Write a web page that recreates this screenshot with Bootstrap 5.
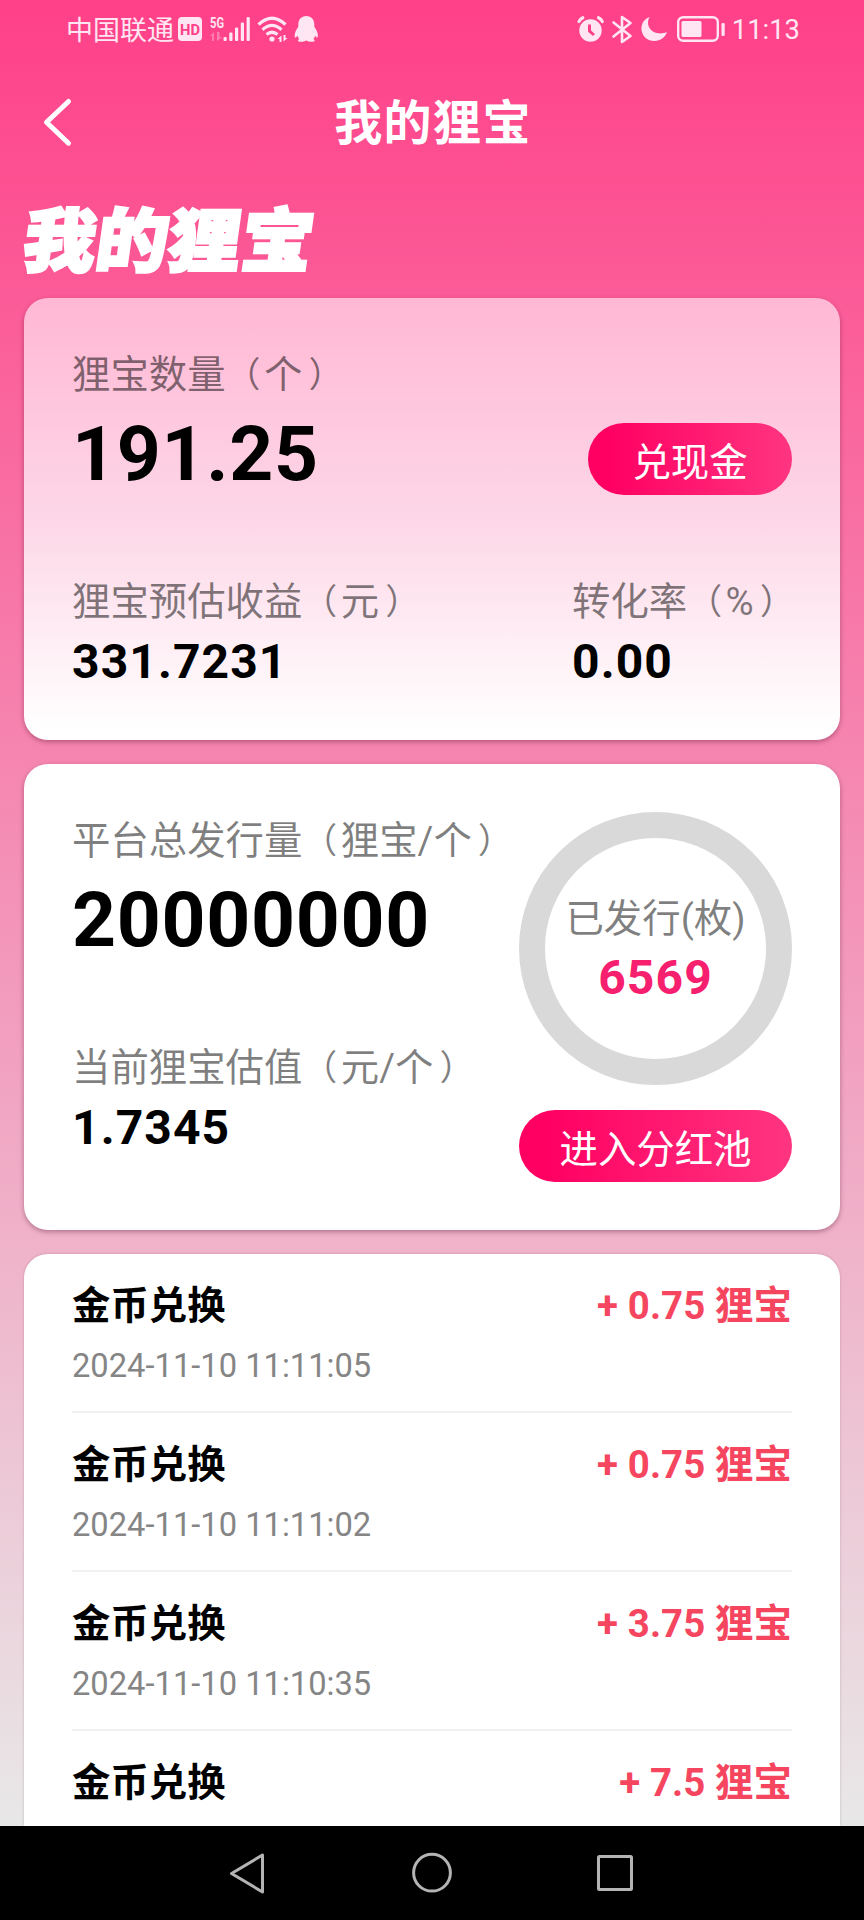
<!DOCTYPE html>
<html lang="zh-CN">
<head>
<meta charset="utf-8">
<meta name="viewport" content="width=device-width, initial-scale=1">
<title>我的狸宝</title>
<link href="https://cdn.jsdelivr.net/npm/bootstrap@5.3.0/dist/css/bootstrap.min.css" rel="stylesheet">
<style>
  body { font-family: Roboto, "Noto Sans CJK SC", sans-serif; color: #000; background: #000; }
  .screen { height: 1920px; overflow: hidden; }
  .wallet { height: 1826px; background: linear-gradient(180deg, #ff4088 0, #e8e8e8 100%); }
  .statusbar { height: 60px; padding-left: 66px; padding-right: 64px; color: #ffe6f2; }
  .carrier { font: 400 27px/36px "Noto Sans CJK SC", sans-serif; margin-top: -3px; }
  .clock { font-size: 27.4px; line-height: 36px; }
  .topbar { height: 128px; padding: 0 40px; }
  .topbar h1 { font: 700 48px/64px "Noto Sans CJK SC", sans-serif; letter-spacing: 1.4px; margin: -11px 0 0; padding-left: 2px; }
  .side { width: 40px; }
  .hero { height: 110px; padding-left: 25px; }
  .hero-title { font: 900 72px/100px "Noto Sans CJK SC", sans-serif; letter-spacing: .5px; -webkit-text-stroke: 3px #fff; transform: skewX(-8deg) scaleY(.96); margin-top: -2px; }
  .panel { border: 0; border-radius: 24px; margin: 0 24px; padding: 0 48px; box-shadow: 0 2px 5px rgba(60, 0, 30, .35); }
  .balance { height: 442px; padding-top: 45px; background: linear-gradient(180deg, #ffb8d3 0, #ffc0d9 14%, #fdd7e7 50%, #fff 98%); }
  .supply { height: 466px; padding-top: 45px; margin-top: 24px; background: #fff; }
  .records { margin-top: 24px; background: #fff; border-radius: 24px 24px 0 0; box-shadow: 0 0 3px rgba(60, 0, 30, .2); min-height: 0; }
  .cap { font-size: 38.4px; line-height: 64px; color: rgba(0, 0, 0, .5); white-space: nowrap; }
  .paren-open, .paren-close { font-size: 35px; line-height: 1; vertical-align: 1px; }
  .paren-open { margin-right: 3.4px; }
  .paren-close { margin-left: 6px; }
  .figure-xl { font-size: 76.8px; font-weight: 700; line-height: 90px; letter-spacing: .7px; margin-top: 1.5px; }
  .figure-md { font-size: 48px; font-weight: 700; line-height: 56px; letter-spacing: 1.1px; margin-top: 0; }
  .second { margin-top: 71.5px; }
  .pill { height: 72px; border: 0; padding: 0; color: #fff; background: linear-gradient(90deg, #ff0062 10%, #ff3580 100%); font: 400 38.4px/65px "Noto Sans CJK SC", sans-serif; }
  .pill-cash { width: 204px; margin-top: 80px; }
  .rate { width: 220px; margin-top: 75px; }
  .ring { width: 273px; height: 273px; border: 26.5px solid #d9d9d9; margin-top: 3px; padding-bottom: 4px; }
  .pill-pool { width: 273px; margin-top: 25px; }
  .issued { color: #f6206f; margin-top: -1px; }
  .entry { height: 159px; padding-top: 20px; border-bottom: 2px solid #f1f1f1; flex: none; }
  .entry-name { font: 700 38.4px/56px "Noto Sans CJK SC", sans-serif; }
  .entry-time { font-size: 32.7px; line-height: 44px; color: #858585; margin-top: 14px; }
  .entry-sum { font-size: 38.4px; font-weight: 700; line-height: 56px; color: #f6455f; letter-spacing: .1px; padding-top: 4px; }
  .sysnav { height: 94px; }
</style>
</head>
<body>
<div class="screen">
  <main class="wallet d-flex flex-column">
    <div class="statusbar flex-shrink-0 d-flex align-items-center justify-content-between">
      <div class="d-flex align-items-center">
        <span class="carrier">中国联通</span>
        <svg width="146" height="36" viewBox="174 12 146 36" fill="#ffe6f2">
          <rect x="178" y="17" width="24" height="24" rx="4"/>
          <text x="190" y="35" font-family="Roboto" font-weight="700" font-size="15.5" text-anchor="middle" textLength="20" lengthAdjust="spacingAndGlyphs" fill="#ff4088">HD</text>
          <text x="210" y="28" font-family="Roboto" font-weight="700" font-size="14" textLength="14" lengthAdjust="spacingAndGlyphs">5G</text>
          <g opacity=".35"><path d="M214 41V32l-4 4h2v5zM217 32v9l5-4h-2.500v-5z"/></g>
          <rect x="223.500" y="37" width="3.200" height="4" rx="1"/><rect x="229.300" y="32.500" width="3.200" height="8.500" rx="1"/><rect x="235" y="27.500" width="3.200" height="13.500" rx="1"/><rect x="240.800" y="22.500" width="3.200" height="18.500" rx="1"/><rect x="246.600" y="17" width="3.200" height="24" rx="1"/>
          <g fill="none" stroke="#ffe6f2" stroke-width="3.200"><path d="M258.500 24.500q13.500-12.500 27 0M262.500 29.700q9.500-8.500 19 0M266.500 34.500q5.500-4.500 11 0"/></g>
          <circle cx="272" cy="39" r="2.600"/>
          <path d="M281.500 42v-6.500l-4 3.500h2v3zM283.500 35v6.500l4-3.500h-2v-3z"/>
          <path d="M306.300 16c-5.300 0-8 4-8 8.500v2.300c-2 2.600-3.800 6.300-3.600 9.700.1 1.500 1.200 1.600 2.700-.7.500 1.400 1 2.300 1.900 3.200-2.400 1.200-1.500 2.700 1.300 2.700 2.500 0 4.400-.4 5.700-1.300 1.300.9 3.200 1.300 5.700 1.300 2.800 0 3.700-1.500 1.300-2.700.9-.9 1.400-1.800 1.900-3.200 1.500 2.300 2.600 2.200 2.700.7.200-3.400-1.600-7.100-3.600-9.700v-2.300c0-4.500-2.700-8.500-8-8.500z"/>
        </svg>
      </div>
      <div class="d-flex align-items-center">
        <svg width="156" height="36" viewBox="576 12 156 36" fill="#ffe6f2">
          <circle cx="590.500" cy="30.500" r="11.200"/>
          <path d="M589.500 24.500v6.500l4.500 4" fill="none" stroke="#ff4088" stroke-width="3"/>
          <path d="M579 21.500q1-2.500 3.800-3.800M598.500 17.700q2.800 1.300 3.800 3.800" fill="none" stroke="#ffe6f2" stroke-width="3.200" stroke-linecap="round"/>
          <path d="M613.500 22.500l17 13.500-8.500 6V17l8.500 6-17 13.500" fill="none" stroke="#ffe6f2" stroke-width="2.600" stroke-linejoin="round" stroke-linecap="round"/>
          <path d="M649.500 17c-13 5-9.500 24 5 24 6 0 10.500-3.500 12.500-9-12 5-23-4-17.500-15z"/>
          <rect x="678.200" y="17.200" width="39.600" height="23.600" rx="5" fill="none" stroke="#ffe6f2" stroke-width="2.400"/>
          <rect x="681.500" y="21" width="20" height="16" rx="1.500"/>
          <rect x="721.500" y="23" width="3.200" height="13" rx="1.200"/>
        </svg>
        <span class="clock">11:13</span>
      </div>
    </div>

    <header class="topbar flex-shrink-0 d-flex align-items-center justify-content-between text-white">
      <a href="#" class="side" aria-label="返回"><svg class="d-block" width="40" height="56" viewBox="40 96 40 56" fill="none" stroke="#fff" stroke-width="5" stroke-linecap="round" stroke-linejoin="round"><path d="M68.500 101.500L46.500 122.300 68.500 143.200"/></svg></a>
      <h1>我的狸宝</h1>
      <span class="side"></span>
    </header>

    <div class="hero flex-shrink-0 text-white d-flex align-items-start"><div class="hero-title">我的狸宝</div></div>

    <section class="panel balance card flex-shrink-0 flex-row justify-content-between">
      <div>
        <div class="cap">狸宝数量<span class="paren-open">（</span>个<span class="paren-close">）</span></div>
        <div class="figure-xl">191.25</div>
        <div class="cap second">狸宝预估收益<span class="paren-open">（</span>元<span class="paren-close">）</span></div>
        <div class="figure-md">331.7231</div>
      </div>
      <div class="d-flex flex-column align-items-end">
        <button type="button" class="btn rounded-pill pill pill-cash">兑现金</button>
        <div class="rate">
          <div class="cap">转化率<span class="paren-open">（</span>%<span class="paren-close">）</span></div>
          <div class="figure-md">0.00</div>
        </div>
      </div>
    </section>

    <section class="panel supply card flex-shrink-0 flex-row">
      <div class="flex-fill">
        <div class="cap">平台总发行量<span class="paren-open">（</span>狸宝/个<span class="paren-close">）</span></div>
        <div class="figure-xl">20000000</div>
        <div class="cap second">当前狸宝估值<span class="paren-open">（</span>元/个<span class="paren-close">）</span></div>
        <div class="figure-md">1.7345</div>
      </div>
      <div class="d-flex flex-column flex-shrink-0">
        <div class="ring rounded-circle d-flex flex-column align-items-center justify-content-center">
          <div class="cap">已发行(枚)</div>
          <div class="figure-md issued">6569</div>
        </div>
        <button type="button" class="btn rounded-pill pill pill-pool">进入分红池</button>
      </div>
    </section>

    <section class="panel records flex-fill overflow-hidden d-flex flex-column">
      <div class="entry d-flex justify-content-between"><div><div class="entry-name">金币兑换</div><div class="entry-time">2024-11-10 11:11:05</div></div><div class="entry-sum">+ 0.75 狸宝</div></div>
      <div class="entry d-flex justify-content-between"><div><div class="entry-name">金币兑换</div><div class="entry-time">2024-11-10 11:11:02</div></div><div class="entry-sum">+ 0.75 狸宝</div></div>
      <div class="entry d-flex justify-content-between"><div><div class="entry-name">金币兑换</div><div class="entry-time">2024-11-10 11:10:35</div></div><div class="entry-sum">+ 3.75 狸宝</div></div>
      <div class="entry d-flex justify-content-between"><div class="entry-name">金币兑换</div><div class="entry-sum">+ 7.5 狸宝</div></div>
    </section>
  </main>

  <nav class="sysnav bg-black d-flex justify-content-center">
    <svg width="420" height="94" viewBox="222 1826 420 94" fill="none" stroke="#b4b4b4" stroke-width="3" stroke-linejoin="round">
      <path d="M262.500 1855v37L231.500 1873.500z"/>
      <circle cx="432" cy="1872.700" r="18.400"/>
      <rect x="598.500" y="1856.500" width="33" height="33" rx="1"/>
    </svg>
  </nav>
</div>
<script src="https://cdn.jsdelivr.net/npm/bootstrap@5.3.0/dist/js/bootstrap.bundle.min.js"></script>
</body>
</html>
